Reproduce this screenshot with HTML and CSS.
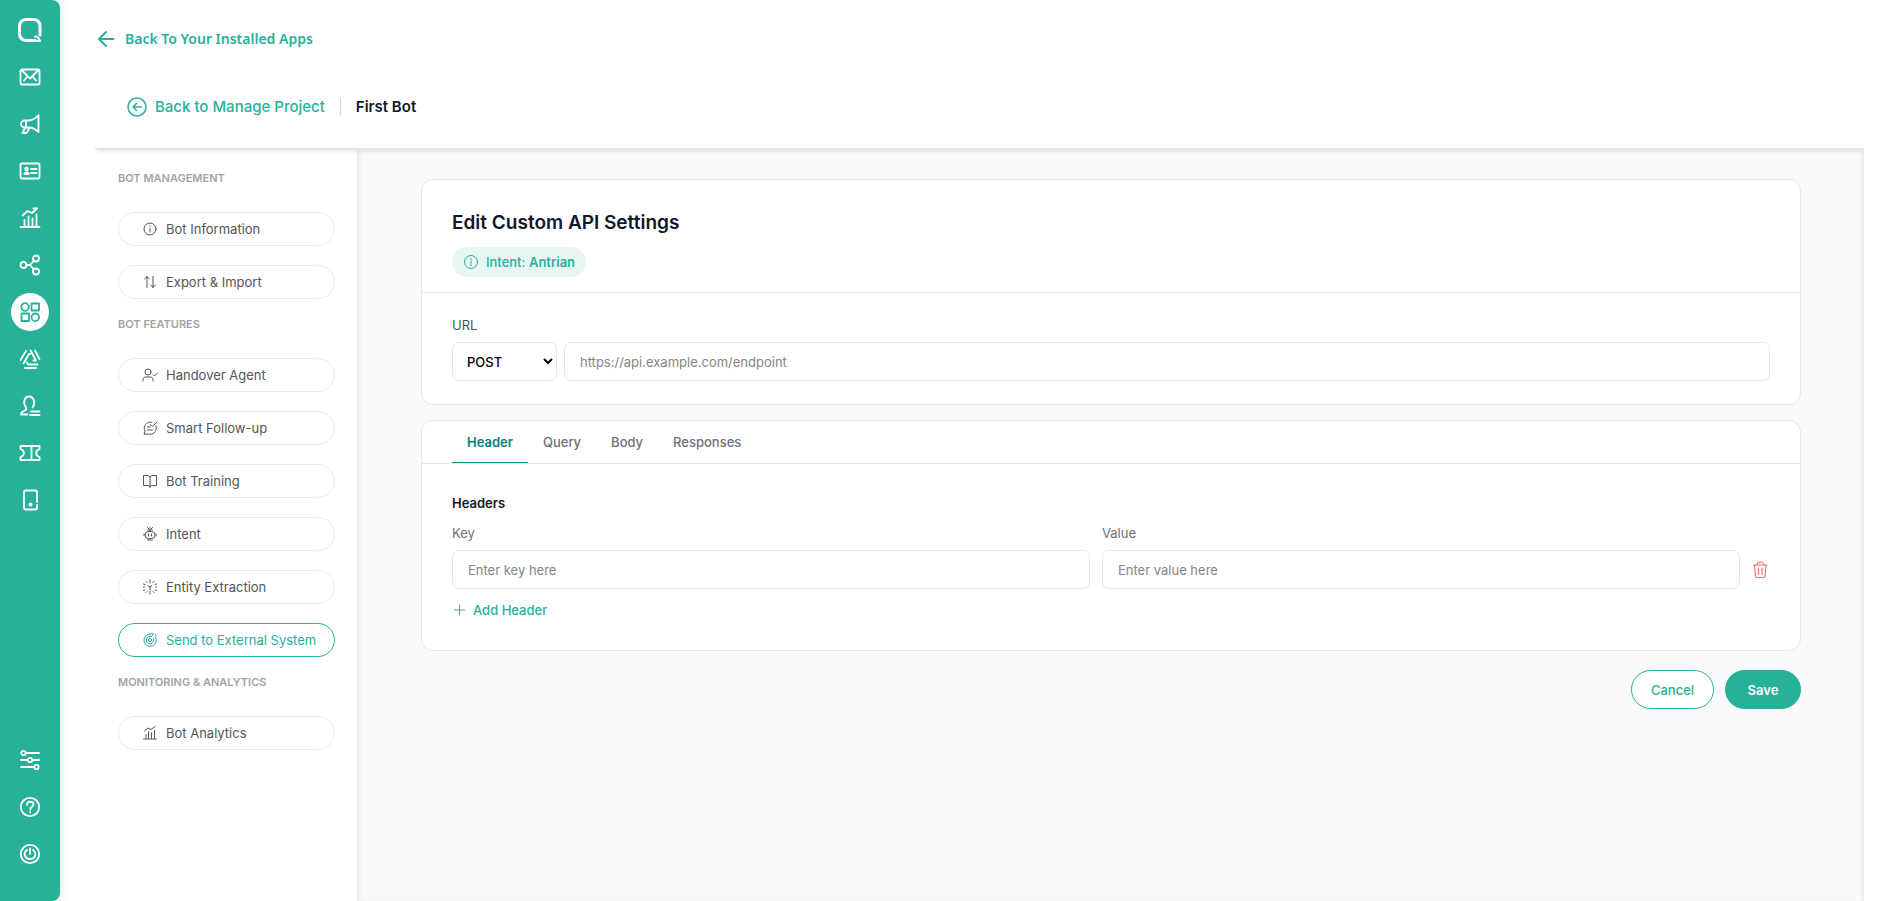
FILE: index.html
```
<!DOCTYPE html>
<html lang="en">
<head>
    <meta charset="UTF-8">
    <meta name="viewport" content="width=device-width, initial-scale=1.0">
    <title>First Bot - Edit Custom API Settings</title>
    <link rel="stylesheet" href="styles.css">
</head>
<body>
    <nav class="sidebar" aria-label="Main">
        <a href="#" class="logo" aria-label="Home">
            <svg viewBox="0 0 26 26"><path d="M23 18v-8.500c0-5-2.500-7-7-7h-6c-5 0-7.500 2.500-7.500 7v6.500c0 5 2.500 7.500 7.500 7.500h8"/><path d="M18 19.500c3 0 4 1.500 5 4.500-1.500.3-3.500-.5-6-.5" stroke-width="2"/></svg>
        </a>
        <a href="#" aria-label="Inbox">
            <svg viewBox="0 0 22 22"><rect x="1.500" y="3.500" width="19" height="15" rx="1.500"/><path d="M3 4.500l8 8 8-8M5 14.500l3-3.500M17 14.500l-3-3.500"/></svg>
        </a>
        <a href="#" aria-label="Broadcast">
            <svg viewBox="0 0 22 22"><path d="M19.500 2v17c-3-3-6-4.500-10-4.500h-4a3.500 3.500 0 0 1 0-7h4c3.500 0 7-2 10-5.500zM7 7.500v7M6 15l-2.500 5h4l3-5"/></svg>
        </a>
        <a href="#" aria-label="Contacts">
            <svg viewBox="0 0 22 22"><rect x="1.500" y="3.500" width="19" height="15" rx="1.500"/><path d="M12 9h5.500M12 13h5.500"/><circle cx="7.500" cy="9" r="1.300"/><path d="M5.500 14c0-2 4-2 4 0z" stroke-width="2"/></svg>
        </a>
        <a href="#" aria-label="Analytics">
            <svg viewBox="0 0 22 22"><path d="M1.500 20h19M5.500 19.500v-6.500M9.500 19.500v-10M13.500 19.500v-8M17.500 19.500v-12M3.500 8.500l5-4.500 4.500 2 5-4.500M14.500 1.500h3.500"/></svg>
        </a>
        <a href="#" aria-label="Integrations">
            <svg viewBox="0 0 22 22"><circle cx="4.500" cy="11" r="3"/><circle cx="17" cy="4.500" r="3"/><circle cx="17" cy="17.500" r="3"/><path d="M7.500 11h3.500l4-4.500M11 11l4 4.500"/></svg>
        </a>
        <a href="#" class="active" aria-label="Apps">
            <svg viewBox="0 0 22 22"><circle cx="6" cy="6" r="3.800"/><rect x="12.500" y="2.500" width="7.500" height="7"/><rect x="2.500" y="12.500" width="7.500" height="7.500"/><circle cx="16.300" cy="16.300" r="3.800"/></svg>
        </a>
        <a href="#" aria-label="Automation">
            <svg viewBox="0 0 22 22"><path d="M1.500 12l5.500-9M4.500 15.500l5.500-9.500h1M11.500 2.500l5.500 10M16 2.500l4.500 8.500M17 12.500h-2.500M8 14.500l1 2h9.500M6 20h11"/></svg>
        </a>
        <a href="#" aria-label="Agents">
            <svg viewBox="0 0 22 22"><path d="M13.500 12.500c3.500-5 1-11-3.500-11s-6.500 6-3 11c1 1.500 0 2.500-2 3.500-2.500 1-3 2-3 3.500h6.500M12 16.500h8.500M11 20h9.500"/></svg>
        </a>
        <a href="#" aria-label="Tickets">
            <svg viewBox="0 0 22 22"><path d="M1.500 4h19v3c-4.500 1.500-4.500 6.500 0 8v3h-19v-3c4.500-1.500 4.500-6.500 0-8zM12.500 4v14"/></svg>
        </a>
        <a href="#" aria-label="Devices">
            <svg viewBox="0 0 22 22"><path d="M18 13v-10c0-1-.5-1.500-1.500-1.500h-10c-1 0-1.500.5-1.500 1.500v16c0 1 .5 1.500 1.500 1.500h10c1 0 1.500-.5 1.500-1.500v-3"/><circle cx="11.500" cy="15.500" r="1.200" fill="#fff"/></svg>
        </a>
        <a href="#" class="push" aria-label="Settings">
            <svg viewBox="0 0 22 22"><circle cx="4.500" cy="4" r="2.200"/><path d="M7 4h13M2 11h6.500M13.500 11h6.500M2 18h13"/><circle cx="11" cy="11" r="2.200"/><circle cx="17.500" cy="18" r="2.200"/></svg>
        </a>
        <a href="#" aria-label="Help">
            <svg viewBox="0 0 22 22"><circle cx="11" cy="11" r="9.200"/><path d="M8 9c0-4.500 6.500-4 6.500-.5 0 2.500-3.200 2-3.200 5M11.200 15.800v.6"/></svg>
        </a>
        <a href="#" aria-label="Log out">
            <svg viewBox="0 0 22 22"><circle cx="11" cy="11" r="9.200"/><path d="M8 7c-4.500 3-2 9 3 9s7.500-6 3-9M11 5.500v5.500"/></svg>
        </a>
    </nav>

    <div class="page">
        <a href="#" class="back-apps">
            <svg width="18" height="18" viewBox="0 0 18 18"><path d="M16.500 9h-14M9 2l-7 7 7 7"/></svg>
            Back To Your Installed Apps
        </a>

        <div class="app">
            <header class="app-header">
                <a href="#" class="back-project">
                    <svg width="20" height="20" viewBox="0 0 20 20"><circle cx="10" cy="10" r="9"/><path d="M14 10h-7.500M9.500 6.500l-3.500 3.500 3.500 3.500"/></svg>
                    Back to Manage Project
                </a>
                <span class="bot-name">First Bot</span>
            </header>

            <div class="app-body">
                <aside class="menu">
                    <h2>BOT MANAGEMENT</h2>
                    <a href="#">
                        <svg viewBox="0 0 16 16"><circle cx="8" cy="8" r="6"/><path d="M8 7.500v3.500M8 5v.5"/></svg>
                        Bot Information
                    </a>
                    <a href="#">
                        <svg viewBox="0 0 16 16"><path d="M5 13.500v-11M2.500 5l2.500-2.500 2.500 2.500M11 2.500v11M8.500 11l2.500 2.500 2.500-2.500"/></svg>
                        Export &amp; Import
                    </a>
                    <h2>BOT FEATURES</h2>
                    <a href="#">
                        <svg viewBox="0 0 16 16"><circle cx="6" cy="5" r="3"/><path d="M1 14v-1c0-2 1-3 3-3h4c2 0 3 1 3 3v1M11 7.500l1.500 1.500 3-3"/></svg>
                        Handover Agent
                    </a>
                    <a href="#">
                        <svg viewBox="0 0 16 16"><path d="M9.500 2.200c-5-1-9 4-6.500 9l-1 3h6c5 0 7-4 6-8M5.500 7h3M5.500 10h5M8.500 4.500l2 2 4.500-4.500"/></svg>
                        Smart Follow-up
                    </a>
                    <a href="#">
                        <svg viewBox="0 0 16 16"><path d="M8 4v10.500M8 4c-.5-1-1.500-1.500-3-1.500h-3.500v10h4.500c1 0 2 .5 2 1.500 0-1 1-1.500 2-1.500h4.500v-10h-3.500c-1.500 0-2.500.5-3 1.500z"/></svg>
                        Bot Training
                    </a>
                    <a href="#">
                        <svg viewBox="0 0 16 16"><rect x="3" y="5.500" width="10" height="7" rx="3.500"/><path d="M6.500 8v2M9.500 8v2M8 5v-3.500M5.500 1.500l1.500 1.500M10.500 1.500l-1.500 1.500M5.500 4h5M2 8v2M14 8v2M5.500 14h5"/></svg>
                        Intent
                    </a>
                    <a href="#">
                        <svg viewBox="0 0 16 16"><path d="M8 1v3M8 8v3M8 8l-2-1.500M8 8l2-1.500M8 12.500v2.500M1.500 5l1.500.5M13 5.500l1.500-.5M1.500 11.500l1.500-.5M13 11l1.500.5M1.500 8h1M13.500 8h1M4 2.500l1 1M12 2.500l-1 1M4 13.500l1-1M12 13.500l-1-1"/></svg>
                        Entity Extraction
                    </a>
                    <a href="#" class="current">
                        <svg viewBox="0 0 16 16"><path d="M10.500 2h-2.500a6.200 6.200 0 1 0 5.500 3M8 4.500a3.700 3.700 0 1 0 3.500 2.500M8 4.500c2 0 3-1 3.500-3M14 4l-.5-1.500"/><circle cx="8" cy="8" r="1.500"/></svg>
                        Send to External System
                    </a>
                    <h2>MONITORING &amp; ANALYTICS</h2>
                    <a href="#">
                        <svg viewBox="0 0 16 16"><path d="M1.500 14h13M4 13.500v-4M6.500 13.500v-6.500M9.500 13.500v-5.500M12.500 13.500v-8M2.500 6l3.500-3 3 1.500 4-3"/></svg>
                        Bot Analytics
                    </a>
                </aside>

                <main>
                    <form>
                        <section class="card">
                            <div class="card-top">
                                <h1>Edit Custom API Settings</h1>
                                <span class="badge">
                                    <svg width="16" height="16" viewBox="0 0 16 16"><circle cx="8" cy="8" r="6.500"/><path d="M8 7v4.500M8 4.500v1"/></svg>
                                    <span>Intent: <b>Antrian</b></span>
                                </span>
                            </div>
                            <div class="card-url">
                                <label for="url">URL</label>
                                <div class="url-row">
                                    <select aria-label="Method">
                                        <option>POST</option>
                                        <option>GET</option>
                                        <option>PUT</option>
                                        <option>DELETE</option>
                                    </select>
                                    <input type="text" id="url" placeholder="https://api.example.com/endpoint">
                                </div>
                            </div>
                        </section>

                        <section class="card">
                            <div class="tabs">
                                <button type="button" class="selected">Header</button>
                                <button type="button">Query</button>
                                <button type="button">Body</button>
                                <button type="button">Responses</button>
                            </div>
                            <div class="headers">
                                <h3>Headers</h3>
                                <div class="pair">
                                    <div class="field">
                                        <label for="key">Key</label>
                                        <input type="text" id="key" placeholder="Enter key here">
                                    </div>
                                    <div class="field">
                                        <label for="value">Value</label>
                                        <input type="text" id="value" placeholder="Enter value here">
                                    </div>
                                    <button type="button" class="delete" aria-label="Delete header">
                                        <svg width="18" height="18" viewBox="0 0 18 18"><path d="M1.500 4h13.500M5 4c0-4 6.500-4 6.500 0M2.500 4l1 11c0 1 .5 1.500 1.500 1.500h6.500c1 0 1.500-.5 1.500-1.500l1-11M6.500 7v6.500M10 7v6.500"/></svg>
                                    </button>
                                </div>
                                <button type="button" class="add">
                                    <svg width="15" height="14" viewBox="0 0 15 14"><path d="M7.500 2v10M2.500 7h10"/></svg>
                                    Add Header
                                </button>
                            </div>
                        </section>

                        <div class="actions">
                            <button type="button" class="cancel">Cancel</button>
                            <button type="submit" class="save">Save</button>
                        </div>
                    </form>
                </main>
            </div>
        </div>
    </div>
</body>
</html>
```
FILE: styles.css
```
* { box-sizing: border-box; }
body { display: flex; min-height: 100vh; margin: 0; background: #fff; font-family: Inter, "Liberation Sans", sans-serif; font-size: 13px; line-height: 18px; color: #0f172a; }
a { text-decoration: none; }
svg { flex: none; fill: none; stroke: currentColor; stroke-linecap: round; stroke-linejoin: round; }
button, input, select { font: inherit; }
button { cursor: pointer; }

/* green icon bar */
.sidebar { display: flex; flex-direction: column; align-items: center; gap: 9px; width: 60px; padding: 11px 0 28px; background: #27b199; border-radius: 0 8px 8px 0; box-shadow: 0 0 12px rgba(0, 0, 0, 0.12); }
.sidebar a { display: flex; align-items: center; justify-content: center; width: 38px; height: 38px; border-radius: 50%; color: #fff; }
.sidebar svg { width: 22px; height: 22px; stroke-width: 1.8; }
.sidebar .logo svg { width: 26px; height: 26px; stroke-width: 3; }
.sidebar .active { background: #fff; color: #27b199; }
.sidebar .push { margin-top: auto; }

.page { flex: 1; display: flex; flex-direction: column; min-width: 0; padding: 27px 27px 0 35px; }
.back-apps { display: flex; align-items: center; gap: 10px; align-self: flex-start; padding-left: 2px; font-family: "Noto Sans", sans-serif; font-size: 14px; font-weight: 600; line-height: 24px; color: #27b199; }
.back-apps svg { stroke-width: 2; }

.app { flex: 1; display: flex; flex-direction: column; margin-top: 22px; }
.app-header { position: relative; display: flex; align-items: center; height: 77px; padding: 0 32px 8px; border-bottom: 2px solid #e5e7eb; box-shadow: 0 4px 3px -2px rgba(0, 0, 0, 0.08); }
.back-project { display: flex; align-items: center; gap: 8px; font-size: 15px; font-weight: 500; color: #27b199; }
.back-project svg { stroke-width: 1.5; }
.bot-name { margin-left: 15px; padding-left: 15px; border-left: 1px solid #d1d5db; font-size: 15px; font-weight: 600; }
.app-body { flex: 1; display: flex; }

/* bot menu */
.menu { position: relative; width: 263px; padding: 19px 22px 19px 23px; border-right: 1px solid #e5e7eb; box-shadow: 2px 0 3px rgba(0, 0, 0, 0.05); }
.menu h2 { margin: 0 0 25px; font-size: 11px; font-weight: 600; color: #a3a3a3; }
.menu h2:not(:first-child) { margin-top: -3px; }
.menu a { display: flex; align-items: center; gap: 8px; height: 34px; margin-bottom: 19px; padding: 0 23px; border: 1px solid #ebebeb; border-radius: 17px; color: #555; white-space: nowrap; }
.menu svg { width: 16px; height: 16px; stroke-width: 1; }
.menu .current { border-color: #27b199; color: #27b199; }

main { flex: 1; min-width: 0; padding: 29px 63px; background: #f9fafc; box-shadow: inset -3px 0 3px rgba(0, 0, 0, 0.05); }
.card { margin-bottom: 15px; background: #fff; border: 1px solid #e5e7eb; border-radius: 12px; }
.card-top { padding: 30px 30px 15px; border-bottom: 1px solid #e5e7eb; }
h1 { margin: 0 0 12px; font-size: 19px; font-weight: 600; line-height: 25px; }
.badge { display: inline-flex; align-items: center; gap: 7px; height: 30px; padding: 0 11px; background: #e8f6f3; border-radius: 15px; font-weight: 500; color: #27b199; }
.badge b { font-weight: 600; }
.card-url { padding: 23px 30px; }
label { display: block; margin-bottom: 8px; color: #4b5563; }
.url-row { display: flex; gap: 7px; }
input, select { height: 39px; border: 1px solid #e5e7eb; border-radius: 7px; background: #fff; }
input { flex: 1; width: 100%; min-width: 0; padding: 0 15px; }
input::placeholder { color: #868686; }
select { width: 105px; padding: 0 0 0 10px; color: #000; font-weight: 500; }

.tabs { display: flex; height: 43px; padding: 0 30px; border-bottom: 1px solid #e5e7eb; }
.tabs button { padding: 0 15px; background: none; border: none; font-weight: 500; color: #6b7280; }
.tabs .selected { border-bottom: 1px solid #0d9080; font-weight: 600; color: #0d8074; }
.headers { padding: 30px 30px 31px; }
h3 { margin: 0 0 12px; font-size: 13px; font-weight: 600; }
.pair { display: flex; align-items: flex-end; gap: 12px; }
.field { flex: 1; }
.field label { color: #6b7280; }
.delete { display: flex; align-items: center; justify-content: center; width: 18px; height: 39px; padding: 0; background: none; border: none; color: #f87171; }
.delete svg { stroke-width: 1.2; }
.add { display: flex; align-items: center; gap: 6px; margin-top: 12px; padding: 0; background: none; border: none; font-weight: 500; color: #27b199; }
.add svg { stroke-width: 1; }

.actions { display: flex; justify-content: flex-end; gap: 11px; margin-top: 19px; }
.actions button { height: 39px; border: 1px solid #27b199; border-radius: 20px; }
.cancel { width: 83px; background: #fff; font-weight: 500; color: #27b199; }
.save { width: 76px; background: #27b199; font-weight: 600; color: #fff; }
```
